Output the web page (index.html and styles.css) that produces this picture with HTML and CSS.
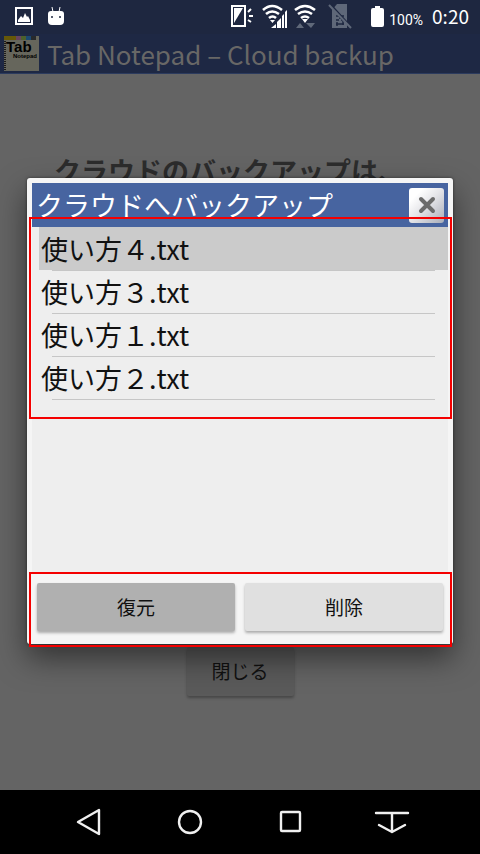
FILE: index.html
```
<!DOCTYPE html>
<html lang="ja">
  <head>
    <meta charset="utf-8">
    <meta name="viewport" content="width=device-width, initial-scale=1">
    <title>Tab Notepad – Cloud backup</title>
    <link rel="stylesheet" href="styles.css">
  </head>

  <body>
    <div class="screen">
      <div class="status-bar">
        <svg class="icon-picture" width="18" height="18" viewBox="0 0 18 18">
          <rect x="1" y="1" width="16" height="16" fill="none" stroke="#fff" stroke-width="2"/>
          <path d="M3 15v-2l3-4 2 2 2-5 2 4 1-1 2 4v2z" fill="#fff"/>
        </svg>
        <svg class="icon-android" width="16" height="18" viewBox="0 0 16 18">
          <path d="M4 0l1 5M12 0l-1 5" stroke="#fff"/>
          <path d="M3 4h10q3 0 3 3v7q0 4-4 4H4q-4 0-4-4V7q0-3 3-3z" fill="#fff"/>
          <circle cx="4" cy="10" r="1" fill="#1e2740"/>
          <circle cx="12" cy="10" r="1" fill="#1e2740"/>
        </svg>

        <div class="status-right">
          <svg width="22" height="22" viewBox="0 0 22 22">
            <rect x="1" y="1" width="13" height="20" fill="none" stroke="#fff" stroke-width="2"/>
            <path d="M3 3h9L3 18z" fill="#fff"/>
            <path d="M17 7l3-3M18 11h4M17 15l3 2" stroke="#fff" stroke-width="2"/>
          </svg>
          <svg class="icon-signal" width="26" height="24" viewBox="0 0 26 24">
            <g fill="none" stroke="#fff" stroke-width="2.6">
              <path d="M1 6q9-8 19 0M4 10q6-5 13 0M7 14q3.500-3 7 0"/>
            </g>
            <path d="M8 16h5l-2.500 3z" fill="#fff"/>
            <path d="M9 24l5-4v4zM15 24v-6l4-4v10zM20 24V12l2-2v14zM23 24V8l2-2v18z" fill="#fff"/>
          </svg>
          <svg class="icon-wifi" width="22" height="24" viewBox="0 0 22 24">
            <g fill="none" stroke="#fff" stroke-width="2.6">
              <path d="M1 6q10-8 20 0M4 10q7-5 14 0M7 14q4-3 8 0"/>
            </g>
            <path d="M8 15h6l-3 4z" fill="#fff"/>
            <path d="M2 24l4-5 4 5zM12 19h9l-4 5z" fill="#5f6879"/>
          </svg>
          <svg class="icon-sim" width="24" height="26" viewBox="0 0 24 26">
            <path d="M9 1h10v24H4V7z" fill="#5f6879"/>
            <path d="M8 13h8M8 17h3M13 17h3M8 21h8M12 12v4M9 19v4M15 18v4" fill="none" stroke="#1e2740" stroke-width="1.500"/>
            <path d="M2 1l21 23" stroke="#1e2740" stroke-width="2"/>
            <path d="M1 2l22 23" stroke="#5f6879" stroke-width="2"/>
          </svg>
          <svg class="icon-battery" width="13" height="21" viewBox="0 0 13 21">
            <path d="M4 0h5v2h2q2 0 2 2v15q0 2-2 2H2q-2 0-2-2V4q0-2 2-2h2z" fill="#fff"/>
          </svg>
          <span class="battery-level">100%</span>
          <span class="clock">0:20</span>
        </div>
      </div>

      <header class="app-bar">
        <svg width="36" height="36" viewBox="0 0 36 36">
          <rect width="35" height="35" fill="#66665c"/>
          <path d="M0 0h12v4H0z" fill="#665808"/>
          <path d="M12 0h5v4h-5z" fill="#67445e"/>
          <path d="M17 0h5v4h-5z" fill="#4d612c"/>
          <path d="M22 0h5v4h-5z" fill="#1d4970"/>
          <path d="M27 0h5v4h-5z" fill="#27292c"/>
          <path d="M1 5v29" stroke="#1b1b1b" stroke-width="2" stroke-dasharray="1 1"/>
          <text x="2" y="16" class="logo-tab">Tab</text>
          <text x="9" y="22" class="logo-notepad">Notepad</text>
        </svg>
        <h1 class="app-title">Tab Notepad – Cloud backup</h1>
      </header>

      <main class="page">
        <p class="page-text">クラウドのバックアップは、</p>
        <button class="close-page" type="button">閉じる</button>

        <section class="dialog" role="dialog" aria-labelledby="dialog-title">
          <div class="dialog-header">
            <h2 class="dialog-title" id="dialog-title">クラウドへバックアップ</h2>
            <button class="dialog-close" type="button" aria-label="閉じる">
              <svg width="18" height="18" viewBox="0 0 18 18">
                <path d="M3 3l12 12M15 3L3 15" stroke="#6b6b6b" stroke-width="4" stroke-linecap="round"/>
              </svg>
            </button>
          </div>
          <div class="dialog-body">
            <ul class="file-list">
              <li class="file selected">使い方４.txt</li>
              <li class="file">使い方３.txt</li>
              <li class="file">使い方１.txt</li>
              <li class="file">使い方２.txt</li>
            </ul>
          </div>
          <div class="dialog-actions">
            <button class="action primary" type="button">復元</button>
            <button class="action" type="button">削除</button>
          </div>
        </section>
      </main>

      <nav class="nav-bar">
        <button class="nav-button" type="button" aria-label="Back">
          <svg width="36" height="36" viewBox="0 0 36 36"><path d="M7 18l21-12v24z"/></svg>
        </button>
        <button class="nav-button" type="button" aria-label="Home">
          <svg width="36" height="36" viewBox="0 0 36 36"><circle cx="18" cy="18" r="11"/></svg>
        </button>
        <button class="nav-button" type="button" aria-label="Recent apps">
          <svg width="36" height="36" viewBox="0 0 36 36"><rect x="8" y="8" width="19" height="19" rx="1"/></svg>
        </button>
        <button class="nav-button" type="button" aria-label="Notifications">
          <svg width="36" height="36" viewBox="0 0 36 36"><path d="M2 9h32M18 9v19M5 21l13 7 13-7"/></svg>
        </button>
      </nav>
    </div>
  </body>
</html>
```

FILE: styles.css
```
* {
  box-sizing: border-box;
  margin: 0;
  padding: 0;
}

body {
  font-family: "Noto Sans CJK JP", sans-serif;
  color: #111;
  background: #000;
}

button {
  border: 0;
  font-family: inherit;
  color: inherit;
}

svg {
  display: block;
  flex-shrink: 0;
}

.screen {
  display: flex;
  flex-direction: column;
  min-height: 100vh;
  background: #646464;
}

/* Status bar */
.status-bar {
  display: flex;
  align-items: center;
  height: 34px;
  padding: 0 11px 2px 15px;
  gap: 15px;
  background: #1e2740;
  color: #fff;
}

.status-right {
  display: flex;
  align-items: center;
  margin-left: auto;
}

.status-right svg {
  margin-right: 9px;
}

.status-right .icon-signal {
  margin-right: 6px;
}

.status-right .icon-wifi {
  margin-right: 12px;
}

.status-right .icon-sim {
  margin-right: 19px;
}

.status-right .icon-battery {
  margin-right: 5px;
}

.battery-level {
  margin-right: 9px;
  padding-top: 8px;
  font-family: Roboto, sans-serif;
  font-size: 14px;
  line-height: 16px;
}

.clock {
  font-size: 19px;
  line-height: 24px;
}

/* App bar */
.app-bar {
  display: flex;
  align-items: center;
  height: 40px;
  padding: 0 4px;
  gap: 7px;
  background: #1e2844;
  border-bottom: 1px solid #2c3b5e;
}

.app-title {
  font-size: 26px;
  font-weight: 400;
  line-height: 38px;
  color: #686766;
  white-space: nowrap;
}

.logo-tab {
  font: bold 15px "Liberation Sans", sans-serif;
}

.logo-notepad {
  font: bold 6px "Liberation Sans", sans-serif;
}

/* Page behind the dialog */
.page {
  position: relative;
  flex: 1;
  display: flex;
  flex-direction: column;
  justify-content: space-between;
  align-items: center;
  padding: 79px 54px 94px;
}

.page-text {
  align-self: stretch;
  font-size: 27px;
  font-weight: 700;
  line-height: 36px;
  color: #2c2c2c;
  white-space: nowrap;
}

.close-page {
  min-width: 107px;
  height: 49px;
  padding-bottom: 2px;
  border-radius: 2px;
  background: #5a5a5a;
  box-shadow: 0 2px 3px rgba(0, 0, 0, 0.3);
  font-size: 19px;
}

/* Dialog */
.dialog {
  position: absolute;
  top: 104px;
  bottom: 146px;
  left: 27px;
  right: 27px;
  display: flex;
  flex-direction: column;
  padding: 5px;
  border-radius: 3px;
  background: #f5f5f5;
  box-shadow: 0 14px 30px rgba(0, 0, 0, 0.5), 0 0 3px rgba(0, 0, 0, 0.5);
}

.dialog-header {
  display: flex;
  align-items: center;
  justify-content: space-between;
  height: 44px;
  padding: 0 4px;
  background: #4764a0;
}

.dialog-title {
  font-size: 27px;
  font-weight: 400;
  line-height: 44px;
  color: #fff;
}

.dialog-close {
  display: grid;
  place-items: center;
  width: 35px;
  height: 35px;
  border-radius: 3px;
  background: linear-gradient(135deg, #fff 20%, #e4e4e8 50%, #a9adb8);
}

.dialog-body,
.dialog-actions {
  position: relative;
}

.dialog-body {
  flex: 1;
  background: #eee;
}

/* Red call-out frames */
.file-list::after,
.dialog-actions::after {
  content: "";
  position: absolute;
  border: 2px solid #f40000;
  pointer-events: none;
}

.file-list {
  position: relative;
  padding: 0 0 20px 7px;
  list-style: none;
}

.file-list::after {
  inset: -10px -4px 0 -3px;
}

.file {
  position: relative;
  height: 43px;
  padding-left: 2px;
  font-size: 27px;
  line-height: 43px;
}

.file::after {
  content: "";
  position: absolute;
  right: 13px;
  bottom: -1px;
  left: 13px;
  height: 1px;
  background: #c6c6c6;
}

.file.selected {
  background: #cbcbcb;
}

.dialog-actions {
  display: flex;
  gap: 10px;
  padding: 11px 5px 8px;
}

.dialog-actions::after {
  inset: 0 -4px -8px -3px;
}

.action {
  flex: 1;
  height: 48px;
  padding-bottom: 2px;
  border-radius: 2px;
  background: #e0e0e0;
  box-shadow: 0 2px 3px rgba(0, 0, 0, 0.3);
  font-size: 19px;
}

.action.primary {
  background: #b0b0b0;
}

/* Navigation bar */
.nav-bar {
  display: grid;
  grid-template-columns: repeat(4, 1fr);
  height: 64px;
  padding: 0 38px;
  background: #000;
}

.nav-button {
  display: grid;
  place-items: center;
  background: none;
}

.nav-button svg {
  fill: none;
  stroke: #f0f0f0;
  stroke-width: 2.4;
  stroke-linecap: round;
  stroke-linejoin: round;
}
```
